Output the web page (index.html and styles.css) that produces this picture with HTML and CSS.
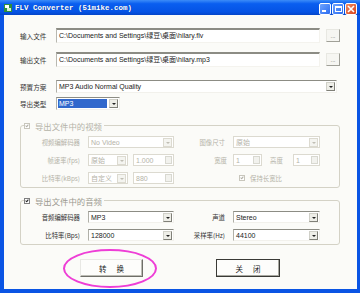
FILE: index.html
```html
<!DOCTYPE html>
<html lang="zh-CN">
<head>
    <meta charset="UTF-8">
    <title>FLV Converter (51mike.com)</title>
    <link rel="stylesheet" href="styles.css">
</head>
<body>
    <div class="window">
        <div class="titlebar">
            <span class="app-icon">
                <svg width="8" height="8" viewBox="0 0 8 8">
                    <rect x="0" y="0" width="8" height="8" fill="#2f8f3a"/>
                    <rect x="1" y="1" width="4" height="3" fill="#ffffff"/>
                    <rect x="3" y="4" width="4" height="3" fill="#d8f0d0"/>
                </svg>
            </span>
            <span class="title">FLV Converter (51mike.com)</span>
            <span class="controls">
                <span class="ctl ctl-min"><i></i></span>
                <span class="ctl ctl-max"><i></i></span>
                <span class="ctl ctl-close">
                    <svg width="8" height="8" viewBox="0 0 8 8">
                        <path d="M1 1 L7 7 M7 1 L1 7" stroke="#fff" stroke-width="1.6"/>
                    </svg>
                </span>
            </span>
        </div>

        <div class="client">
            <div class="row row-file row-first">
                <span class="lbl">输入文件</span>
                <div class="edit edit-path">C:\Documents and Settings\绿豆\桌面\hilary.flv</div>
                <span class="browse">...</span>
            </div>
            <div class="row row-file row-second">
                <span class="lbl">输出文件</span>
                <div class="edit edit-path">C:\Documents and Settings\绿豆\桌面\hilary.mp3</div>
                <span class="browse">...</span>
            </div>
            <div class="row row-preset">
                <span class="lbl">预置方案</span>
                <div class="combo combo-preset">
                    <span class="combo-text">MP3 Audio Normal Quality</span>
                    <span class="arrow"></span>
                </div>
            </div>
            <div class="row row-type">
                <span class="lbl">导出类型</span>
                <div class="combo combo-type">
                    <span class="combo-text selected">MP3</span>
                    <span class="arrow"></span>
                </div>
            </div>

            <fieldset class="group group-video disabled">
                <legend><span class="check checked"></span>导出文件中的视频</legend>
                <div class="grow grow-1">
                    <span class="glbl">视频编解码器</span>
                    <div class="combo c-left"><span class="combo-text">No Video</span><span class="arrow"></span></div>
                    <span class="rlbl">图像尺寸</span>
                    <div class="combo c-right"><span class="combo-text">原始</span><span class="arrow"></span></div>
                </div>
                <div class="grow">
                    <span class="glbl">帧速率(fps)</span>
                    <div class="combo c-small"><span class="combo-text">原始</span><span class="arrow"></span></div>
                    <div class="spin s-left"><span class="spin-text">1.000</span><span class="spin-btn"></span></div>
                    <span class="rlbl rlbl-w">宽度</span>
                    <div class="spin s-w"><span class="spin-text">1</span><span class="spin-btn"></span></div>
                    <span class="hlbl">高度</span>
                    <div class="spin s-h"><span class="spin-text">1</span><span class="spin-btn"></span></div>
                </div>
                <div class="grow">
                    <span class="glbl">比特率(kBps)</span>
                    <div class="combo c-small"><span class="combo-text">自定义</span><span class="arrow"></span></div>
                    <div class="spin s-left"><span class="spin-text">880</span><span class="spin-btn"></span></div>
                    <span class="keep"><span class="check checked"></span>保持长宽比</span>
                </div>
            </fieldset>

            <fieldset class="group group-audio">
                <legend><span class="check checked"></span>导出文件中的音频</legend>
                <div class="grow grow-1">
                    <span class="glbl">音频编解码器</span>
                    <div class="combo c-left"><span class="combo-text">MP3</span><span class="arrow"></span></div>
                    <span class="rlbl">声道</span>
                    <div class="combo c-right"><span class="combo-text">Stereo</span><span class="arrow"></span></div>
                </div>
                <div class="grow">
                    <span class="glbl">比特率(Bps)</span>
                    <div class="combo c-left"><span class="combo-text">128000</span><span class="arrow"></span></div>
                    <span class="rlbl">采样率(Hz)</span>
                    <div class="combo c-right"><span class="combo-text">44100</span><span class="arrow"></span></div>
                </div>
            </fieldset>

            <div class="buttons">
                <span class="btn btn-convert">转换</span>
                <span class="btn btn-close">关闭</span>
                <span class="highlight"></span>
            </div>
        </div>
    </div>
</body>
</html>
```

FILE: styles.css
```css
* {
    box-sizing: border-box;
}

body {
    margin: 0;
    width: 360px;
    height: 293px;
    overflow: hidden;
    font-family: "Liberation Sans", "Noto Sans CJK SC", sans-serif;
    font-size: 7px;
    color: #222;
    background: #fff;
}

.window {
    width: 360px;
    height: 293px;
    display: flex;
    flex-direction: column;
    background: #0a54e4;
    padding: 0 3px 4px 4px;
}

/* title bar */
.titlebar {
    height: 15px;
    margin: 0 -3px 0 -4px;
    padding: 0 3px 0 4px;
    display: flex;
    align-items: center;
    background: linear-gradient(#3c8cf8 0%, #0a5ef0 25%, #0553e4 80%, #0445c8 100%);
    color: #fff;
}

.app-icon {
    width: 8px;
    height: 8px;
    display: flex;
    margin-right: 3px;
}

.title {
    font-family: "Liberation Mono", monospace;
    font-weight: bold;
    font-size: 7.5px;
    text-shadow: 1px 0 0 rgba(0, 0, 0, 0.25);
    flex: 1;
}

.controls {
    display: flex;
    gap: 1px;
    margin-top: 2px;
}

.ctl {
    width: 12px;
    height: 12px;
    border: 1px solid #fff;
    border-radius: 2px;
    background: linear-gradient(135deg, #6fa4ff, #2a6cf0);
    display: flex;
    align-items: center;
    justify-content: center;
}

.ctl-min i {
    width: 4px;
    height: 2px;
    background: #fff;
    margin-top: 5px;
    margin-right: 2px;
}

.ctl-max i {
    width: 7px;
    height: 6px;
    border: 1px solid #fff;
    border-top-width: 2px;
}

.ctl-close {
    background: linear-gradient(135deg, #f08a60, #d8431c);
}

/* client area */
.client {
    flex: 1;
    position: relative;
    background: #fbfbf8;
    padding: 0 0 0 16px;
    display: flex;
    flex-direction: column;
}

.row {
    display: flex;
    align-items: center;
}

.lbl {
    width: 36px;
    font-family: "Noto Sans CJK SC", sans-serif;
    font-size: 6.6px;
    color: #333;
}

.row-first {
    margin-top: 13px;
    height: 15px;
}

.row-second {
    margin-top: 9px;
    height: 15px;
}

.edit {
    height: 15px;
    background: #fff;
    border: 1px solid #f4f3ee;
    border-top: 2px solid #8c8c84;
    border-left: 1px solid #b8b8b0;
    padding: 0 2px;
    line-height: 12px;
    white-space: nowrap;
    overflow: hidden;
}

.edit-path {
    width: 264px;
}

.browse {
    width: 14px;
    height: 13px;
    margin-left: 6px;
    border: 1px solid #e8e8e2;
    border-right-color: #a0a098;
    border-bottom-color: #a0a098;
    background: #f6f6f2;
    color: #666;
    font-size: 6px;
    text-align: center;
    line-height: 12px;
}

.row-preset {
    margin-top: 13px;
    height: 13px;
}

.row-type {
    margin-top: 4px;
    height: 13px;
}

.combo {
    height: 13px;
    display: flex;
    align-items: center;
    background: #fff;
    border: 1px solid #f2f1ec;
    border-top: 1px solid #8c8c84;
    border-left: 1px solid #b0b0a8;
    padding: 1px;
}

.combo-preset {
    width: 281px;
}

.combo-type {
    width: 64px;
}

.combo-text {
    flex: 1;
    height: 100%;
    padding-left: 1px;
    line-height: 10px;
    white-space: nowrap;
    overflow: hidden;
}

.combo-text.selected {
    background: #3168cc;
    color: #fff;
    margin-right: 2px;
}

.arrow {
    width: 9px;
    height: 9px;
    background: #eeeee8;
    border: 1px solid #d0d0c8;
    border-right-color: #808078;
    border-bottom-color: #808078;
    position: relative;
}

.arrow::after {
    content: "";
    position: absolute;
    left: 2px;
    top: 3px;
    border-left: 2px solid transparent;
    border-right: 2px solid transparent;
    border-top: 2px solid #222;
}

/* group boxes */
.group {
    margin: 10px 0 0 0;
    width: 320px;
    padding: 0;
    border: 1px solid #d4d2c6;
    border-radius: 3px;
}

.group legend {
    display: flex;
    align-items: center;
    margin-left: 3px;
    padding: 0 2px 0 0;
    height: 11px;
    font-family: "Noto Sans CJK SC", sans-serif;
    font-size: 8.4px;
    color: #9c9a90;
}

.check {
    width: 6px;
    height: 6px;
    margin-right: 5px;
    border: 1px solid #7f7f7f;
    background: #fff;
    position: relative;
}

.check.checked::after {
    content: "";
    position: absolute;
    left: 1px;
    top: 0;
    width: 1px;
    height: 2px;
    border-right: 1px solid #222;
    border-bottom: 1px solid #222;
    transform: rotate(40deg);
}

.group-video {
    height: 68px;
}

.group-audio {
    margin-top: 7px;
    height: 50px;
}

.grow {
    display: flex;
    align-items: center;
    height: 12px;
    margin-top: 6px;
}

.grow-1 {
    margin-top: 5px;
}

.glbl,
.rlbl,
.hlbl {
    font-family: "Noto Sans CJK SC", sans-serif;
    font-size: 6.4px;
    color: #333;
    white-space: nowrap;
}

.glbl {
    width: 59px;
    margin-right: 8px;
    text-align: right;
}

.rlbl {
    width: 51px;
    margin-right: 8px;
    text-align: right;
}

.rlbl-w {
    width: 53px;
    margin-right: 6px;
}

.hlbl {
    width: 16px;
    margin-left: 8px;
    margin-right: 7px;
}

.grow .combo {
    height: 12px;
}

.c-left {
    width: 86px;
}

.c-right {
    width: 87px;
}

.c-small {
    width: 40px;
}

.spin {
    height: 12px;
    display: flex;
    background: #fff;
    border: 1px solid #e8e7e0;
    border-top-color: #a8a8a0;
    border-left-color: #b8b8b0;
    padding: 1px;
}

.s-left {
    width: 41px;
    margin-left: 5px;
}

.s-w {
    width: 29px;
}

.s-h {
    width: 27px;
}

.spin-text {
    flex: 1;
    padding-left: 1px;
    line-height: 9px;
}

.spin-btn {
    width: 7px;
    background: linear-gradient(#f2f2ee 0 45%, #b8b8b0 45% 55%, #f2f2ee 55%);
    border: 1px solid #d8d8d0;
}

.keep {
    display: flex;
    align-items: center;
    margin-left: 65px;
    font-family: "Noto Sans CJK SC", sans-serif;
    font-size: 6.4px;
}

.keep .check {
    margin-right: 5px;
}

/* disabled look */
.disabled legend,
.disabled .glbl,
.disabled .rlbl,
.disabled .hlbl,
.disabled .keep,
.disabled .combo-text,
.disabled .spin-text {
    color: #b5b3a8;
}

.disabled .combo,
.disabled .spin {
    border-color: #dcdad0;
}

.disabled .arrow {
    border-color: #dcdad0;
    background: #f4f4f0;
}

.disabled .arrow::after {
    border-top-color: #c0beb4;
}

.disabled .check {
    border-color: #c8c6bc;
}

.disabled .check.checked::after {
    border-color: #b0aea4;
}

/* buttons */
.buttons {
    position: relative;
    display: flex;
    margin-top: 14px;
    padding-left: 60px;
}

.btn {
    width: 63px;
    height: 18px;
    display: flex;
    align-items: center;
    justify-content: center;
    font-family: "Noto Sans CJK SC", sans-serif;
    font-size: 7.5px;
    letter-spacing: 10px;
    text-indent: 10px;
    background: #fdfdfb;
    color: #222;
}

.btn-convert {
    border: 1px solid #e8e8e4;
    border-right-color: #6e6e68;
    border-bottom-color: #6e6e68;
    box-shadow: inset -1px -1px 0 #bcbcb4;
}

.btn-close {
    width: 64px;
    margin-left: 73px;
    border: 1px solid #3a3a36;
    box-shadow: inset -1px -1px 0 #a8a8a0;
}

.highlight {
    position: absolute;
    left: 43px;
    top: -10px;
    width: 94px;
    height: 39px;
    border: 2px solid #ee3ed6;
    border-radius: 50%;
}
```
